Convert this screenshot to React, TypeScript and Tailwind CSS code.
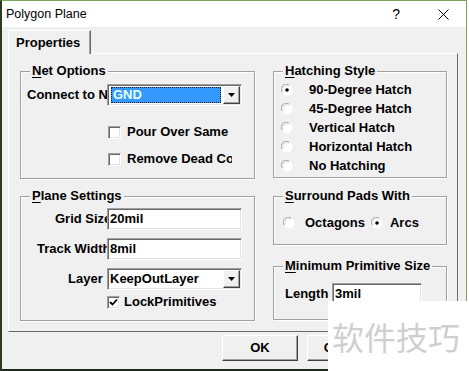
import React from "react";

// sunken / raised 3D edges used all over this old-style dialog
const sunken =
  "border border-t-[#a0a0a0] border-l-[#a0a0a0] border-r-white border-b-white shadow-[inset_1px_1px_0_#696969,inset_-1px_-1px_0_#e3e3e3]";
const raised =
  "border border-t-white border-l-white border-r-[#404040] border-b-[#404040] shadow-[inset_-1px_-1px_0_#a0a0a0]";

function Group({
  title,
  hot,
  className,
  children,
}: {
  title: string;
  hot: string;
  className: string;
  children: React.ReactNode;
}) {
  return (
    <div
      className={`relative border border-[#a0a0a0] shadow-[inset_1px_1px_0_#fff,1px_1px_0_#fff] ${className}`}
    >
      <span className="absolute left-[9px] top-[-9px] bg-[#f0f0f0] px-[2px] leading-[16px] whitespace-nowrap">
        <span className="underline underline-offset-2">{hot}</span>
        {title}
      </span>
      {children}
    </div>
  );
}

function Radio({ checked }: { checked?: boolean }) {
  return (
    <svg width="12" height="12" viewBox="0 0 12 12" className="shrink-0">
      <circle cx="6" cy="6" r="5.5" fill="#fff" />
      <path d="M1.2 8.2A5 5 0 0 1 8.2 1.2" stroke="#a0a0a0" strokeWidth="1" fill="none" />
      <path d="M2.2 7.6A4 4 0 0 1 7.6 2.2" stroke="#dcdcdc" strokeWidth="1" fill="none" />
      {checked && <circle cx="6" cy="6" r="1.8" fill="#000" />}
    </svg>
  );
}

function Check({ checked }: { checked?: boolean }) {
  return (
    <div className={`w-[13px] h-[13px] bg-white shrink-0 ${sunken} flex items-center justify-center`}>
      {checked && (
        <svg width="9" height="9" viewBox="0 0 9 9">
          <path d="M1 4l2.5 2.5L8 1.5" stroke="#000" strokeWidth="1.8" fill="none" />
        </svg>
      )}
    </div>
  );
}

function DropBtn() {
  return (
    <div className={`w-[17px] h-[18px] bg-[#f0f0f0] ${raised} flex items-center justify-center shrink-0`}>
      <svg width="7" height="4" viewBox="0 0 7 4">
        <path d="M0 0h7L3.5 4z" fill="#000" />
      </svg>
    </div>
  );
}

function Clip({ pl, w, text }: { pl: number; w: string; text: string }) {
  return (
    <div className={`${w} overflow-hidden whitespace-nowrap shrink-0`} style={{ paddingLeft: pl }}>
      {text}
    </div>
  );
}

const hatches = ["90-Degree Hatch", "45-Degree Hatch", "Vertical Hatch", "Horizontal Hatch", "No Hatching"];

export default function App() {
  return (
    <div className="w-[469px] h-[371px] bg-white relative overflow-hidden font-['Liberation_Sans',Arial,sans-serif] text-black">
      <div className="w-[467px] h-[371px] flex flex-col border-l-2 border-l-[#2a3d20] border-t border-t-[#7aa85a] border-r border-r-[#7aa85a] border-b-2 border-b-[#1c2818]">
        {/* title bar */}
        <div className="h-[26px] bg-white flex items-center shrink-0 text-[12.5px]">
          <span className="ml-[4px]">Polygon Plane</span>
          <span className="ml-auto mr-[38px] text-[14px]">?</span>
          <svg width="11" height="11" viewBox="0 0 11 11" className="mr-[17px]">
            <path d="M0.5 0.5l10 10M10.5 0.5l-10 10" stroke="#000" strokeWidth="1" />
          </svg>
        </div>

        <div className="flex-1 bg-[#f0f0f0] pl-[6px] pt-[3px] text-[13px] font-bold leading-[16px]">
          {/* tab */}
          <div className="relative z-10 -mb-px w-[83px] h-[24px] bg-[#f0f0f0] border-t border-l border-t-white border-l-white border-r border-r-[#696969] shadow-[inset_-1px_0_0_#a0a0a0] pl-[7px] pt-[4px]">
            Properties
          </div>

          {/* tab page */}
          <div className="w-[450px] h-[279px] border border-t-white border-l-white border-r-[#696969] border-b-[#696969] pl-[11px] pt-[17px] flex gap-[18px]">
            <div className="w-[235px] flex flex-col">
              <Group hot="N" title="et Options" className="h-[108px]">
                <div className="pt-[12px] flex items-center h-[34px]">
                  <Clip pl={6} w="w-[86px]" text="Connect to Net" />
                  <div className={`w-[135px] h-[22px] bg-white ${sunken} flex items-center pl-[3px] pr-[1px]`}>
                    <div className="flex-1 h-[16px] bg-[#3399ff] border border-dotted border-[#1a1a1a] text-[#e8ffff] pl-[1px] leading-[14px]">
                      GND
                    </div>
                    <div className="ml-[2px]">
                      <DropBtn />
                    </div>
                  </div>
                </div>
                <div className="mt-[18px] ml-[87px] flex items-center gap-[6px] h-[16px]">
                  <Check />
                  <Clip pl={0} w="w-[105px]" text="Pour Over Same Net" />
                </div>
                <div className="mt-[11px] ml-[87px] flex items-center gap-[6px] h-[16px]">
                  <Check />
                  <Clip pl={0} w="w-[105px]" text="Remove Dead Copper" />
                </div>
              </Group>

              <Group hot="P" title="lane Settings" className="h-[125px] mt-[17px]">
                <div className="pt-[11px] flex flex-col gap-[8px]">
                  {[
                    { l: "Grid Size", pl: 34, v: "20mil" },
                    { l: "Track Width", pl: 16, v: "8mil" },
                  ].map((r) => (
                    <div key={r.l} className="flex items-center h-[22px]">
                      <Clip pl={r.pl} w="w-[86px]" text={r.l} />
                      <div className={`w-[135px] h-[22px] bg-white ${sunken} pl-[2px] leading-[19px]`}>{r.v}</div>
                    </div>
                  ))}
                  <div className="flex items-center h-[22px]">
                    <Clip pl={47} w="w-[86px]" text="Layer" />
                    <div className={`w-[135px] h-[22px] bg-white ${sunken} pl-[2px] pr-[1px] flex items-center`}>
                      <span className="flex-1">KeepOutLayer</span>
                      <DropBtn />
                    </div>
                  </div>
                </div>
                <div className="mt-[5px] ml-[86px] flex items-center gap-[4px] h-[14px]">
                  <Check checked />
                  <span>LockPrimitives</span>
                </div>
              </Group>
            </div>

            <div className="w-[174px] flex flex-col">
              <Group hot="H" title="atching Style" className="h-[107px]">
                <div className="pt-[8px] flex flex-col">
                  {hatches.map((h, i) => (
                    <div key={h} className="h-[19px] flex items-center pl-[7px] gap-[16px]">
                      <Radio checked={i === 0} />
                      <span>{h}</span>
                    </div>
                  ))}
                </div>
              </Group>

              <Group hot="S" title="urround Pads With" className="h-[49px] mt-[18px]">
                <div className="pt-[18px] pl-[9px] flex items-center h-[34px]">
                  <Radio />
                  <span className="ml-[10px]">Octagons</span>
                  <span className="ml-[6px]">
                    <Radio checked />
                  </span>
                  <span className="ml-[7px]">Arcs</span>
                </div>
              </Group>

              <Group hot="M" title="inimum Primitive Size" className="h-[54px] mt-[21px]">
                <div className="pt-[16px] pl-[11px] flex items-center">
                  <span className="w-[47px]">Length</span>
                  <div className={`w-[90px] h-[22px] bg-white ${sunken} pl-[2px] leading-[19px]`}>3mil</div>
                </div>
              </Group>
            </div>
          </div>

          {/* buttons */}
          <div className="mt-[3px] ml-[214px] flex gap-[9px]">
            <div className={`w-[76px] h-[26px] bg-[#f0f0f0] ${raised} flex items-center justify-center`}>OK</div>
            <div className={`w-[76px] h-[26px] bg-[#f0f0f0] ${raised} flex items-center justify-center`}>Cancel</div>
          </div>
        </div>
      </div>

      {/* watermark */}
      <div className="absolute left-[328px] top-[301px] w-[141px] h-[70px] bg-white flex items-center pl-[4px] text-[32px] font-normal text-[#cfcfcf] font-['Noto_Sans_CJK_SC','Noto_Sans',sans-serif] leading-none">
        软件技巧
      </div>
    </div>
  );
}
